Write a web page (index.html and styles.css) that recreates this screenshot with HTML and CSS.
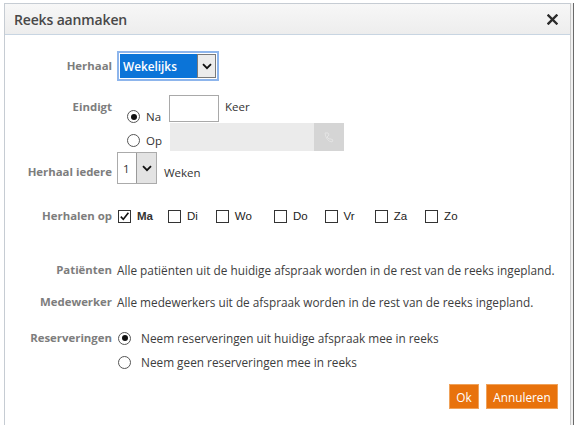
FILE: index.html
```html
<!DOCTYPE html>
<html>
<head>
<meta charset="utf-8">
<link rel="stylesheet" href="styles.css">
</head>
<body>
<div class="dialog">
  <div class="header">
    <span class="title">Reeks aanmaken</span>
    <svg class="close" width="11" height="11" viewBox="0 0 11 11"><path d="M1.5 1.5 L9.5 9.5 M9.5 1.5 L1.5 9.5" stroke="#2b2b2b" stroke-width="2.4" stroke-linecap="square"/></svg>
  </div>
  <div class="body">
    <div class="row row-herhaal">
      <div class="label">Herhaal</div>
      <div class="select-focus">
        <span class="select-value">Wekelijks</span>
        <span class="select-arrow"><svg width="10" height="7" viewBox="0 0 10 7"><polyline points="1,1.2 5,5.2 9,1.2" fill="none" stroke="#111" stroke-width="1.8"/></svg></span>
      </div>
    </div>

    <div class="row row-eindigt">
      <div class="label label-top">Eindigt</div>
      <div class="end-options">
        <div class="end-line">
          <span class="radio-item end-radio"><span class="radio checked"></span><span class="radio-text">Na</span></span>
          <span class="count-input"></span>
          <span class="keer">Keer</span>
        </div>
        <div class="end-line">
          <span class="radio-item end-radio2"><span class="radio"></span><span class="radio-text">Op</span></span>
          <span class="date-input"></span>
          <span class="date-btn"><svg width="12" height="12" viewBox="0 0 12 12"><path d="M2 2 L5 2 L6 4 L4 6 Q6 9 8 8 L10 9 L9 11 Q3 10 2 2 Z" fill="none" stroke="#e4e4e4" stroke-width="1"/></svg></span>
        </div>
      </div>
    </div>

    <div class="row row-iedere">
      <div class="label">Herhaal iedere</div>
      <div class="small-select">
        <span class="small-value">1</span>
        <span class="small-arrow"><svg width="10" height="7" viewBox="0 0 10 7"><polyline points="1,1.2 5,5.2 9,1.2" fill="none" stroke="#111" stroke-width="1.8"/></svg></span>
      </div>
      <span class="weken">Weken</span>
    </div>

    <div class="row row-days">
      <div class="label">Herhalen op</div>
      <div class="days">
        <span class="day d-ma"><span class="cb"><svg width="11" height="11" viewBox="0 0 11 11"><polyline points="1.8,5.6 4.3,8.3 9.4,1.8" fill="none" stroke="#111" stroke-width="1.6"/></svg></span><span class="day-text">Ma</span></span>
        <span class="day d-di"><span class="cb"></span><span class="day-text">Di</span></span>
        <span class="day d-wo"><span class="cb"></span><span class="day-text">Wo</span></span>
        <span class="day d-do"><span class="cb"></span><span class="day-text">Do</span></span>
        <span class="day d-vr"><span class="cb"></span><span class="day-text">Vr</span></span>
        <span class="day d-za"><span class="cb"></span><span class="day-text">Za</span></span>
        <span class="day d-zo"><span class="cb"></span><span class="day-text">Zo</span></span>
      </div>
    </div>

    <div class="row row-text row-pat">
      <div class="label">Patiënten</div>
      <div class="text">Alle patiënten uit de huidige afspraak worden in de rest van de reeks ingepland.</div>
    </div>

    <div class="row row-text row-med">
      <div class="label">Medewerker</div>
      <div class="text">Alle medewerkers uit de afspraak worden in de rest van de reeks ingepland.</div>
    </div>

    <div class="row row-res">
      <div class="label label-res">Reserveringen</div>
      <div class="res-options">
        <span class="radio-item res-item"><span class="radio checked"></span><span class="res-text">Neem reserveringen uit huidige afspraak mee in reeks</span></span>
        <span class="radio-item res-item res-item2"><span class="radio"></span><span class="res-text">Neem geen reserveringen mee in reeks</span></span>
      </div>
    </div>

    <div class="buttons">
      <button class="btn btn-ok">Ok</button>
      <button class="btn btn-cancel">Annuleren</button>
    </div>
  </div>
</div>
</body>
</html>
```

FILE: styles.css
```css
html, body {
  margin: 0;
  padding: 0;
  background: #ffffff;
}
body {
  font-family: "Open Sans", "Liberation Sans", sans-serif;
  font-size: 11.8px;
  color: #3c3c3c;
}
.dialog {
  margin: 3px 0 0 4px;
  width: 567px;
  height: 422px;
  box-sizing: border-box;
  border: 1px solid #c6ccd3;
  border-bottom: none;
  border-right: 1px solid #c9c9c9;
  box-shadow: 2px 0 0 #f1f1f1, 3px 0 0 #6a6a6a;
}
.header {
  height: 30px;
  background: linear-gradient(#f7f7f7, #ededed);
  border-bottom: 1px solid #c8d5e2;
  display: flex;
  align-items: center;
  justify-content: space-between;
  padding: 0 12px 0 9px;
}
.title {
  font-size: 14px;
  font-weight: 600;
  color: #484848;
  letter-spacing: -0.15px;
}
.close {
  display: block;
  margin-top: 1px;
}
.body {
  padding: 16px 12px 0 0;
}
.row {
  display: flex;
  align-items: center;
}
.label {
  width: 107px;
  flex: none;
  text-align: right;
  margin-right: 5px;
  font-weight: 700;
  font-size: 11.4px;
  color: #7d7d7d;
  line-height: 16px;
}

/* Herhaal select */
.row-herhaal {
  height: 30px;
}
.select-focus {
  width: 102px;
  height: 30px;
  box-sizing: border-box;
  border: 2px solid #8db5ec;
  padding: 1px;
  display: flex;
  background: #fff;
}
.select-value {
  flex: 1;
  background: #0b74d8;
  color: #ffffff;
  font-weight: 600;
  font-size: 11.8px;
  display: flex;
  align-items: center;
  padding-left: 3px;
}
.select-arrow {
  width: 19px;
  box-sizing: border-box;
  border: 1px solid #7a7a7a;
  background: #ececec;
  display: flex;
  align-items: center;
  justify-content: center;
}

/* Eindigt */
.row-eindigt {
  margin-top: 14px;
  align-items: flex-start;
}
.label-top {
  margin-top: 4px;
}
.end-options {
  margin-left: 10px;
  display: flex;
  flex-direction: column;
  gap: 1px;
}
.end-line {
  display: flex;
  align-items: flex-start;
  height: 27px;
}
.radio-item {
  display: flex;
  align-items: center;
}
.radio {
  width: 13px;
  height: 13px;
  box-sizing: border-box;
  border: 1px solid #555;
  border-radius: 50%;
  background: #fff;
  flex: none;
  position: relative;
}
.radio.checked::after {
  content: "";
  position: absolute;
  left: 2.5px;
  top: 2.5px;
  width: 6px;
  height: 6px;
  border-radius: 50%;
  background: #111;
}
.radio-text {
  margin-left: 6px;
  font-size: 11.5px;
  color: #333;
}
.end-radio {
  margin-top: 14px;
}
.end-radio2 {
  margin-top: 10px;
}
.count-input {
  width: 50px;
  height: 27px;
  box-sizing: border-box;
  border: 1px solid #a9a9a9;
  background: #fff;
  margin-left: 8px;
}
.keer {
  margin-left: 6px;
  margin-top: 4px;
  font-size: 11.5px;
  color: #333;
}
.date-input {
  width: 144px;
  height: 28px;
  background: #ebebeb;
  margin-left: 8px;
}
.date-btn {
  width: 30px;
  height: 28px;
  background: #d5d5d5;
  display: flex;
  align-items: center;
  justify-content: center;
}

/* Herhaal iedere */
.row-iedere {
  margin-top: 2px;
}
.row-iedere .label {
  margin-top: 8px;
}
.small-select {
  width: 40px;
  height: 32px;
  box-sizing: border-box;
  border: 1px solid #ababab;
  display: flex;
  background: #fff;
}
.small-value {
  flex: 1;
  padding: 8px 0 0 5px;
  font-size: 11.5px;
  color: #333;
}
.small-arrow {
  width: 19px;
  border-left: 1px solid #9a9a9a;
  background: #e3e3e3;
  display: flex;
  align-items: center;
  justify-content: center;
}
.weken {
  margin-left: 7px;
  margin-top: 8px;
  font-size: 11.5px;
  color: #333;
}

/* Days */
.row-days {
  margin-top: 24px;
}
.days {
  display: flex;
  align-items: center;
}
.day {
  display: flex;
  align-items: center;
}
.cb {
  width: 13px;
  height: 13px;
  box-sizing: border-box;
  border: 1px solid #333;
  background: #fff;
  display: flex;
  align-items: center;
  justify-content: center;
  margin-left: 1px;
}
.day-text {
  margin-left: 6px;
  font-family: "Liberation Sans", Arial, sans-serif;
  font-size: 11.5px;
  color: #222;
}
.d-ma .day-text { font-weight: 700; color: #333; }
.d-di { margin-left: 14px; }
.d-wo { margin-left: 17px; }
.d-do { margin-left: 21px; }
.d-vr { margin-left: 16px; }
.d-za { margin-left: 19px; }
.d-zo { margin-left: 17px; }

/* Text rows */
.row-text .text {
  color: #3d3d3d;
  line-height: 16px;
  white-space: nowrap;
}
.row-pat {
  margin-top: 38px;
}
.row-med {
  margin-top: 16px;
}

/* Reserveringen */
.row-res {
  margin-top: 20px;
  align-items: flex-start;
}
.res-options {
  display: flex;
  flex-direction: column;
  gap: 8px;
  margin-left: 1px;
}
.res-item {
  height: 16px;
}
.res-text {
  margin-left: 10px;
  color: #3d3d3d;
}

/* Buttons */
.buttons {
  display: flex;
  justify-content: flex-end;
  gap: 7px;
  margin-top: 14px;
}
.btn {
  height: 25px;
  box-sizing: border-box;
  border: 1px solid #f0a25a;
  background: #e8720c;
  color: #ffffff;
  font-family: "Open Sans", sans-serif;
  font-size: 11.8px;
  padding: 0;
  margin: 0;
}
.btn-ok {
  width: 30px;
}
.btn-cancel {
  width: 72px;
}
```
